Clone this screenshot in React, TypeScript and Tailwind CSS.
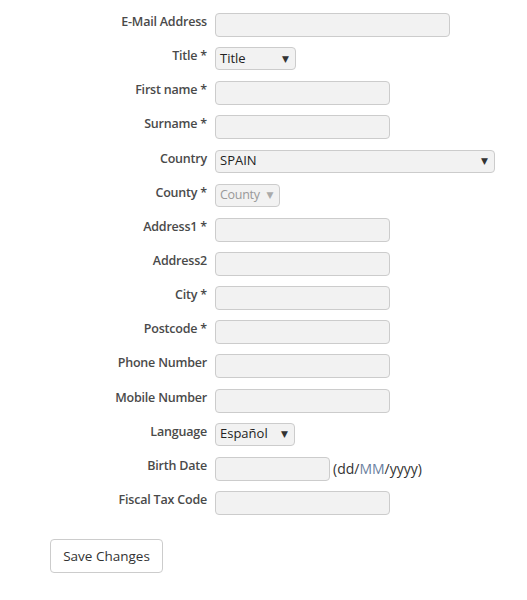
import React from "react";

const font = { fontFamily: '"Open Sans", "DejaVu Sans", sans-serif' };

function Row({ label, children }: { label: string; children: React.ReactNode }) {
  return (
    <div className="flex h-[24px] items-start">
      <label className="w-[207px] text-right text-[12.5px] font-semibold leading-[18px] tracking-[-0.2px] text-[#4a4a4a]">
        {label}
      </label>
      <div className="ml-[8px] flex items-center">{children}</div>
    </div>
  );
}

function TextBox({ w }: { w: string }) {
  return (
    <input
      type="text"
      className={`h-[24px] ${w} rounded-[4px] border border-[#cccccc] bg-[#f2f2f2] px-1 text-[13px] outline-none`}
    />
  );
}

function Select({ value, w, disabled }: { value: string; w: string; disabled?: boolean }) {
  return (
    <div
      className={`flex h-[23px] ${w} items-center justify-between rounded-[4px] border border-[#cccccc] bg-[#f2f2f2] pl-[4px] pr-[6px] ${
        disabled ? "text-[12.5px] tracking-[-0.3px] text-[#999]" : "text-[13px] text-[#222]"
      }`}
    >
      <span>{value}</span>
      <span className={`text-[9px] ${disabled ? "text-[#aaa]" : "text-[#333]"}`}>▼</span>
    </div>
  );
}

export default function App() {
  return (
    <div className="h-[600px] w-[527px] bg-white" style={font}>
      <div className="flex flex-col gap-[10.15px] pt-[13px]">
        <Row label="E-Mail Address">
          <TextBox w="w-[235px]" />
        </Row>
        <Row label="Title *">
          <Select value="Title" w="w-[81px]" />
        </Row>
        <Row label="First name *">
          <TextBox w="w-[175px]" />
        </Row>
        <Row label="Surname *">
          <TextBox w="w-[175px]" />
        </Row>
        <Row label="Country">
          <Select value="SPAIN" w="w-[280px]" />
        </Row>
        <Row label="County *">
          <Select value="County" w="w-[65px]" disabled />
        </Row>
        <Row label="Address1 *">
          <TextBox w="w-[175px]" />
        </Row>
        <Row label="Address2">
          <TextBox w="w-[175px]" />
        </Row>
        <Row label="City *">
          <TextBox w="w-[175px]" />
        </Row>
        <Row label="Postcode *">
          <TextBox w="w-[175px]" />
        </Row>
        <Row label="Phone Number">
          <TextBox w="w-[175px]" />
        </Row>
        <Row label="Mobile Number">
          <TextBox w="w-[175px]" />
        </Row>
        <Row label="Language">
          <Select value="Español" w="w-[80px]" />
        </Row>
        <Row label="Birth Date">
          <TextBox w="w-[115px]" />
          <span className="ml-[3px] text-[14px] text-[#333]">
            (dd/<span className="text-[#6a7fa0]">MM</span>/yyyy)
          </span>
        </Row>
        <Row label="Fiscal Tax Code">
          <TextBox w="w-[175px]" />
        </Row>
      </div>
      <div className="pl-[50px] pt-[24px]">
        <button className="h-[34px] w-[113px] rounded-[4px] border border-[#cccccc] bg-white text-[13.5px] text-[#333]">
          Save Changes
        </button>
      </div>
    </div>
  );
}
